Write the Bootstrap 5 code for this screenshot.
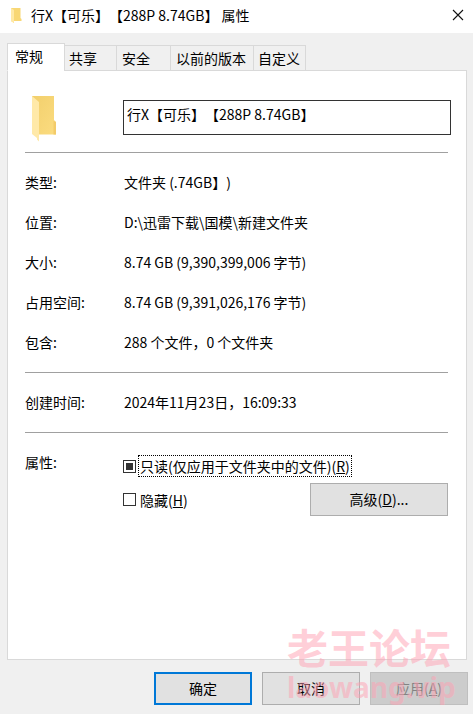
<!DOCTYPE html>
<html lang="zh-CN">
<head>
<meta charset="utf-8">
<meta name="viewport" content="width=device-width, initial-scale=1">
<title>属性</title>
<link href="https://cdn.jsdelivr.net/npm/bootstrap@5.3.0/dist/css/bootstrap.min.css" rel="stylesheet">
<style>
body { font-family: "Noto Sans CJK SC", sans-serif; font-size: 14px; line-height: 20px; color: #000; background: #f0f0f0; text-spacing-trim: space-all; }
.title-bar { height: 33px; background: #fff; padding: 0 9px 3px 11px; }
.title-bar h1 { font-size: 14px; line-height: 20px; font-weight: 400; margin: 0 0 0 9px; }
.close-btn { line-height: 0; padding: 0; border: 0; background: none; }
.sheet { margin: 10px 6px 0 7px; }
.prop-tabs { border: 0; margin-bottom: -1px; align-items: flex-end; position: relative; }
.prop-tabs .nav-link { height: 26px; min-width: 53px; margin: 0 0 0 -1px; padding: 0 5px 1px 4px; border: 1px solid #d9d9d9; border-radius: 0; color: #000; background: #f0f0f0; text-align: left; line-height: 20px; }
.prop-tabs .nav-link.active { height: 28px; min-width: 58px; margin: 0; padding: 0 7px 2px; background: #fff; border-color: #d9d9d9 #d9d9d9 #fff; }
.prop-tabs .tab-wide { min-width: 55px; padding-left: 5px; }
.prop-tabs .tab-long { min-width: 84px; padding-left: 5px; }
.panel { background: #fff; border: 1px solid #d9d9d9; padding: 25px 18px 20px 17px; }
.label-col { flex: 0 0 99px; }
.head-row { height: 56px; }
.folder-icon { padding-left: 7px; }
.name-box { height: 35px; margin: 4px -3px 0 -1px; padding: 0 3px 8px; border: 1px solid #333; border-radius: 0; font-size: 14px; line-height: 20px; color: #000; min-width: 0; }
.rule { height: 1px; margin: 0; border: 0; background: #a0a0a0; opacity: 1; }
.prop-list { padding: 9px 0 10px; }
.prop-list > div { height: 40px; align-items: center; }
.prop-list dt { font-weight: 400; }
.attrs { padding-top: 19px; }
.box { appearance: none; flex: none; width: 13px; height: 13px; margin: 0 2px 0 -1px; border: 1px solid #333; background: #fff; }
.box:indeterminate { background: #333 content-box; padding: 2px; box-shadow: none; }
.check-row { padding-top: 3px; }
.check-row + .check-row { padding-top: 6px; }
.check-label { padding: 0 1px; border: 1px solid transparent; }
.check-label.focused { border: 1px dotted #000; }
.win-btn { height: 33px; padding: 0 0 2px; border: 1px solid #adadad; border-radius: 0; background: #e1e1e1; color: #000; font-size: 14px; line-height: 20px; }
.win-btn.default { border: 2px solid #0078d7; }
.win-btn:disabled { background: #ccc; border-color: #bfbfbf; color: #838383; opacity: 1; }
.advanced { width: 138px; }
.footer-bar { padding: 12px 5px 9px; gap: 10px; }
.footer-bar .win-btn { width: 98px; }
.stamp { right: 20px; bottom: 7px; width: 166px; color: rgba(255, 160, 178, .5); font-weight: 700; pointer-events: none; white-space: nowrap; }
.stamp .cn { font-size: 41px; line-height: 44px; }
.stamp .site { font-family: "Noto Sans", sans-serif; font-size: 28px; line-height: 39px; }
</style>
<script src="https://cdn.jsdelivr.net/npm/bootstrap@5.3.0/dist/js/bootstrap.bundle.min.js"></script>
</head>
<body>
<div class="d-flex flex-column min-vh-100 position-relative">
  <header class="title-bar d-flex align-items-center">
    <svg width="11" height="15" viewBox="0 0 11 15" aria-hidden="true"><path d="M0 0H9.500V10L10.500 11V13H3V15L0 13Z" fill="#f8d775"/><path d="M0 0L3 2V15L0 13Z" fill="#ffe9a6"/></svg>
    <h1>行X【可乐】【288P 8.74GB】 属性</h1>
    <button type="button" class="close-btn ms-auto" aria-label="关闭"><svg width="12" height="12" viewBox="0 0 12 12"><path d="M1 1L11 11M11 1L1 11" stroke="#111" stroke-width="1.100"/></svg></button>
  </header>
  <main class="sheet d-flex flex-column flex-grow-1">
    <div class="nav nav-tabs prop-tabs" role="tablist">
      <button type="button" class="nav-link active" role="tab" aria-selected="true">常规</button>
      <button type="button" class="nav-link" role="tab">共享</button>
      <button type="button" class="nav-link tab-wide" role="tab">安全</button>
      <button type="button" class="nav-link tab-long" role="tab">以前的版本</button>
      <button type="button" class="nav-link" role="tab">自定义</button>
    </div>
    <section class="panel flex-grow-1">
      <div class="head-row d-flex align-items-start">
        <div class="label-col folder-icon"><svg width="24" height="46" viewBox="0 0 24 46" aria-hidden="true"><defs><linearGradient id="fold" x2="1" y2="1"><stop stop-color="#f2cf6c"/><stop offset="1" stop-color="#fbdc80"/></linearGradient></defs><path d="M0 0H22V24L24 26V38.500H6L0 37Z" fill="url(#fold)"/><path d="M0 0L7 6V45.500L5 43.500V42L0 38Z" fill="#ffe9a8"/><path d="M21.500 25L24 26V38.500H21.500Z" fill="#f3cb69"/></svg></div>
        <input class="name-box flex-grow-1" type="text" aria-label="名称" value="行X【可乐】【288P 8.74GB】">
      </div>
      <hr class="rule">
      <dl class="prop-list m-0">
        <div class="d-flex"><dt class="label-col">类型:</dt><dd class="m-0">文件夹 (.74GB】)</dd></div>
        <div class="d-flex"><dt class="label-col">位置:</dt><dd class="m-0">D:\迅雷下载\国模\新建文件夹</dd></div>
        <div class="d-flex"><dt class="label-col">大小:</dt><dd class="m-0">8.74 GB (9,390,399,006 字节)</dd></div>
        <div class="d-flex"><dt class="label-col">占用空间:</dt><dd class="m-0">8.74 GB (9,391,026,176 字节)</dd></div>
        <div class="d-flex"><dt class="label-col">包含:</dt><dd class="m-0">288 个文件，0 个文件夹</dd></div>
      </dl>
      <hr class="rule">
      <dl class="prop-list m-0">
        <div class="d-flex"><dt class="label-col">创建时间:</dt><dd class="m-0">2024年11月23日，16:09:33</dd></div>
      </dl>
      <hr class="rule">
      <div class="attrs d-flex">
        <div class="label-col">属性:</div>
        <div class="flex-grow-1">
          <div class="check-row d-flex align-items-center">
            <input class="box" type="checkbox" id="readonly"><label class="check-label focused" for="readonly">只读(仅应用于文件夹中的文件)(<u>R</u>)</label>
          </div>
          <div class="check-row d-flex justify-content-between align-items-center">
            <div class="d-flex align-items-center"><input class="box" type="checkbox" id="hidden"><label class="check-label" for="hidden">隐藏(<u>H</u>)</label></div>
            <button type="button" class="win-btn advanced">高级(<u>D</u>)...</button>
          </div>
        </div>
      </div>
    </section>
  </main>
  <footer class="footer-bar d-flex justify-content-end">
    <button type="button" class="win-btn default">确定</button>
    <button type="button" class="win-btn">取消</button>
    <button type="button" class="win-btn" disabled>应用(<u>A</u>)</button>
  </footer>
  <div class="stamp position-absolute"><div class="cn">老王论坛</div><div class="site">laowang.vip</div></div>
</div>
<script>document.getElementById('readonly').indeterminate = true;</script>
</body>
</html>
